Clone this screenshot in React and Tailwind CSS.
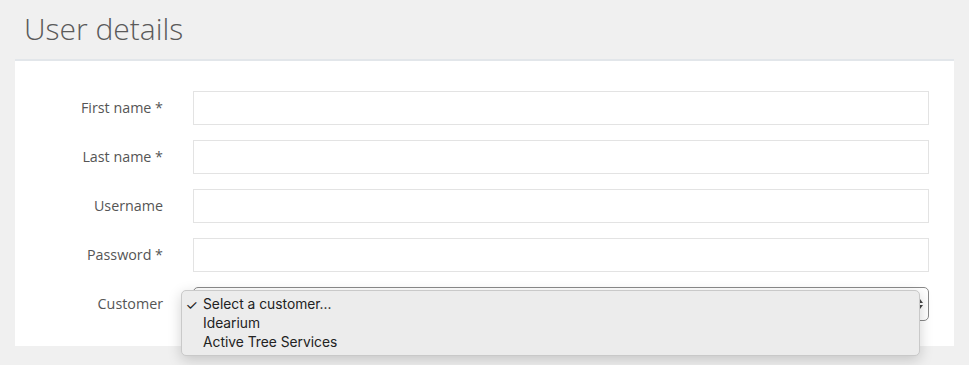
import React from 'react';

const fields = [
    { label: 'First name *' },
    { label: 'Last name *' },
    { label: 'Username' },
    { label: 'Password *' },
];

const customers = ['Select a customer...', 'Idearium', 'Active Tree Services'];

const UserDetails = () => {
    return (
        <div className="w-[969px] h-[365px] bg-[#f0f0f0] text-[#555] overflow-hidden" style={{ fontFamily: '"Open Sans", "Liberation Sans", sans-serif' }}>
            {/* Page title */}
            <div className="h-[59px] pl-[24px] pt-[9px]">
                <h1 className="text-[30px] leading-[40px] font-light text-[#5a5a5a]">User details</h1>
            </div>

            {/* Form panel */}
            <div className="mx-[15px] bg-white border-t-2 border-[#e2e6ea] pt-[30px] pb-[25px] pr-[25px] flex flex-col gap-[15px]">
                {fields.map((field) => (
                    <div key={field.label} className="flex items-center">
                        <label className="w-[148px] text-right text-[14.3px] leading-[20px] text-[#555]">{field.label}</label>
                        <input
                            type="text"
                            className="ml-[30px] flex-1 h-[34px] border border-[#e3e3e3] bg-white focus:outline-none"
                        />
                    </div>
                ))}

                {/* Customer select with open menu */}
                <div className="flex items-center">
                    <label className="w-[148px] text-right text-[14.3px] leading-[20px] text-[#555]">Customer</label>
                    <div className="relative ml-[30px] flex-1 h-[34px]">
                        <div className="h-full border border-[#8a8a8a] rounded-[5px] bg-white flex items-center justify-end pr-[4px]">
                            <svg width="8" height="14" viewBox="0 0 8 14">
                                <path d="M1 6 L4 2 L7 6 Z" fill="#444" />
                                <path d="M1 8 L4 12 L7 8 Z" fill="#444" />
                            </svg>
                        </div>
                        <div
                            className="absolute left-[-12px] top-[3px] w-[739px] h-[66px] bg-[#ececec] border border-[#c9c9c9] rounded-[5px] shadow-[0_4px_14px_rgba(0,0,0,0.18)] pt-[4px] text-[13.8px] leading-[19px] text-[#222]"
                            style={{ fontFamily: 'Inter, "Liberation Sans", sans-serif' }}
                        >
                            {customers.map((c, i) => (
                                <div key={c} className="flex items-center">
                                    <span className="w-[21px] text-right pr-[5px] text-[14px]">{i === 0 ? '✓' : ''}</span>
                                    <span>{c}</span>
                                </div>
                            ))}
                        </div>
                    </div>
                </div>
            </div>
        </div>
    );
};

export default UserDetails;
